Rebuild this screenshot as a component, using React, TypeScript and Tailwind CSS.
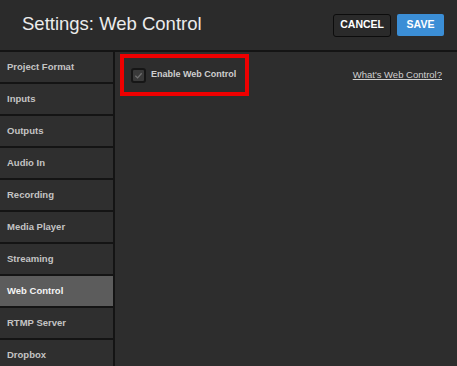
import React from 'react';

const items = [
  'Project Format',
  'Inputs',
  'Outputs',
  'Audio In',
  'Recording',
  'Media Player',
  'Streaming',
  'Web Control',
  'RTMP Server',
  'Dropbox',
];

export default function App() {
  const active = 'Web Control';

  return (
    <div
      className="w-[457px] h-[366px] overflow-hidden bg-[#2d2d2d] flex flex-col"
      style={{ fontFamily: '"Liberation Sans", Arial, sans-serif' }}
    >
      {/* header */}
      <div className="h-[52px] shrink-0 flex items-center border-b-2 border-[#141414] bg-[#2b2b2b] pl-[22px] pr-[13px]">
        <h1 className="flex-1 text-[18.5px] text-[#ececec] leading-none pb-[2px]">
          Settings: Web Control
        </h1>
        <button className="h-[23px] px-[6px] mr-[6px] rounded-[3px] border border-[#0c0c0c] bg-[#2a2a2a] text-white text-[10.5px] font-bold">
          CANCEL
        </button>
        <button className="h-[22px] w-[47px] rounded-[2px] bg-[#3b8ed6] text-white text-[10.5px] font-bold">
          SAVE
        </button>
      </div>

      <div className="flex flex-1 min-h-0">
        {/* sidebar */}
        <div className="w-[115px] shrink-0 border-r-2 border-[#141414] flex flex-col">
          {items.map((it) => (
            <div
              key={it}
              className={`h-[32px] shrink-0 border-b-2 border-[#141414] flex items-center pl-[7px] text-[9.5px] font-bold ${
                it === active
                  ? 'bg-[#5c5c5c] text-[#f4f4f4]'
                  : 'bg-[#2f2f2f] text-[#c4c4c4]'
              }`}
            >
              {it}
            </div>
          ))}
        </div>

        {/* content */}
        <div className="flex-1 flex items-start pl-[5px] pr-[15px] pt-[2px]">
          <div className="w-[129px] h-[42px] border-4 border-[#ee0000] flex items-center pl-[7px] gap-[5px]">
            <div className="w-[15px] h-[15px] rounded-[3px] border-2 border-[#161616] bg-[#3a3a3a] flex items-center justify-center">
              <svg width="9" height="9" viewBox="0 0 10 10">
                <path d="M1.5 5.2 L4 7.6 L8.5 2.5" fill="none" stroke="#707070" strokeWidth="1.4" />
              </svg>
            </div>
            <span className="text-[9px] font-bold text-[#cfcfcf]">Enable Web Control</span>
          </div>
          <div className="flex-1" />
          <a className="mt-[14px] text-[9.5px] text-[#d0d0d0] underline">What's Web Control?</a>
        </div>
      </div>
    </div>
  );
}
